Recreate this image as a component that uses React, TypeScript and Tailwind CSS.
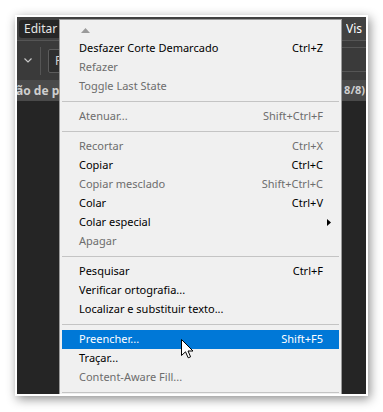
import React from "react";

type Item =
  | { kind: "sep" }
  | { kind: "item"; label: string; shortcut?: string; enabled: boolean; sub?: boolean; active?: boolean };

const menuItems: Item[] = [
  { kind: "item", label: "Desfazer Corte Demarcado", shortcut: "Ctrl+Z", enabled: true },
  { kind: "item", label: "Refazer", enabled: false },
  { kind: "item", label: "Toggle Last State", enabled: false },
  { kind: "sep" },
  { kind: "item", label: "Atenuar...", shortcut: "Shift+Ctrl+F", enabled: false },
  { kind: "sep" },
  { kind: "item", label: "Recortar", shortcut: "Ctrl+X", enabled: false },
  { kind: "item", label: "Copiar", shortcut: "Ctrl+C", enabled: true },
  { kind: "item", label: "Copiar mesclado", shortcut: "Shift+Ctrl+C", enabled: false },
  { kind: "item", label: "Colar", shortcut: "Ctrl+V", enabled: true },
  { kind: "item", label: "Colar especial", enabled: true, sub: true },
  { kind: "item", label: "Apagar", enabled: false },
  { kind: "sep" },
  { kind: "item", label: "Pesquisar", shortcut: "Ctrl+F", enabled: true },
  { kind: "item", label: "Verificar ortografia...", enabled: true },
  { kind: "item", label: "Localizar e substituir texto...", enabled: true },
  { kind: "sep" },
  { kind: "item", label: "Preencher...", shortcut: "Shift+F5", enabled: true, active: true },
  { kind: "item", label: "Traçar...", enabled: true },
  { kind: "item", label: "Content-Aware Fill...", enabled: false },
  { kind: "sep" },
];

function MenuRow({ item }: { item: Item }) {
  if (item.kind === "sep") {
    return (
      <div className="h-[11px] flex items-center px-[2px]">
        <div className="w-full h-px bg-[#c4c4c4]" />
      </div>
    );
  }
  const color = item.active ? "text-white" : item.enabled ? "text-black" : "text-[#6d6d6d]";
  return (
    <div
      className={
        "relative h-[19px] mx-[2px] flex items-center justify-between pl-[17px] pr-[16px] " +
        (item.active ? "bg-[#0078d7] " : "") +
        color
      }
    >
      <span>{item.label}</span>
      {item.shortcut && <span>{item.shortcut}</span>}
      {item.sub && (
        <svg className="absolute right-[8px] top-[6px]" width="4" height="7" viewBox="0 0 4 7">
          <path d="M0 0 L4 3.5 L0 7 Z" fill="#000" />
        </svg>
      )}
    </div>
  );
}

function Cursor() {
  return (
    <svg className="absolute left-[181px] top-[339px]" width="13" height="20" viewBox="0 0 13 20">
      <path
        d="M0.5 0.5 L0.5 16.5 L4.5 12.8 L7.2 18.8 L9.6 17.8 L7 12 L12 12 Z"
        fill="#fff"
        stroke="#000"
        strokeWidth="1"
        strokeLinejoin="miter"
      />
    </svg>
  );
}

export default function App() {
  return (
    <div
      className="relative w-[383px] h-[412px] bg-white pt-[15px] pl-[15px]"
      style={{ fontFamily: '"Noto Sans", "Open Sans", sans-serif' }}
    >
      <div className="relative w-[353px] h-[381px] border-2 border-white shadow-[2px_3px_10px_rgba(0,0,0,0.45)] bg-[#252525] overflow-hidden">
        {/* menu bar */}
        <div className="h-[23px] bg-[#414141] flex items-center justify-between pl-[2px] text-[12px] text-[#e6e6e6]">
          <div className="h-[18px] px-[5px] rounded-[3px] bg-[#262626] flex items-center">Editar</div>
          <div className="w-[20px] overflow-hidden whitespace-nowrap text-white">Vis</div>
        </div>
        {/* options bar */}
        <div className="h-[40px] bg-[#3a3a3a] border-t border-[#555] flex items-center">
          <div className="w-[22px] flex justify-center">
            <svg width="8" height="5" viewBox="0 0 8 5">
              <path d="M0.5 0.5 L4 4 L7.5 0.5" fill="none" stroke="#c8c8c8" strokeWidth="1.2" />
            </svg>
          </div>
          <div className="w-px h-[28px] bg-[#555] ml-[1px]" />
          <div className="ml-[7px] h-[24px] w-[60px] border border-[#5c5c5c] bg-[#2e2e2e] rounded-[2px] flex items-center pl-[6px] text-[12px] text-[#d0d0d0]">
            P
          </div>
          <div className="ml-auto h-full w-[24px] flex flex-col">
            <div className="h-[6px]" />
            <div className="h-px bg-[#555]" />
            <div className="flex-1" />
            <div className="h-px bg-[#555]" />
            <div className="h-[8px]" />
          </div>
        </div>
        {/* document tab */}
        <div className="h-[21px] bg-[#4a4a4a] flex items-center justify-between text-[12px] font-bold text-[#cfcfcf] whitespace-nowrap overflow-hidden">
          <span className="-ml-[1px]">ão de p</span>
          <span className="text-[11px] pr-[1px]">8/8)</span>
        </div>

        {/* dropdown menu */}
        <div className="absolute left-[42px] top-[2px] w-[283px] h-[390px] bg-[#f0f0f0] border border-[#9a9a9a] text-[11px] pt-[1px]">
          <div className="h-[18px] flex items-center pl-[21px]">
            <svg width="9" height="5" viewBox="0 0 9 5">
              <path d="M0 5 L4.5 0 L9 5 Z" fill="#9a9a9a" />
            </svg>
          </div>
          {menuItems.map((item, i) => (
            <MenuRow key={i} item={item} />
          ))}
        </div>
      </div>
      <Cursor />
    </div>
  );
}
